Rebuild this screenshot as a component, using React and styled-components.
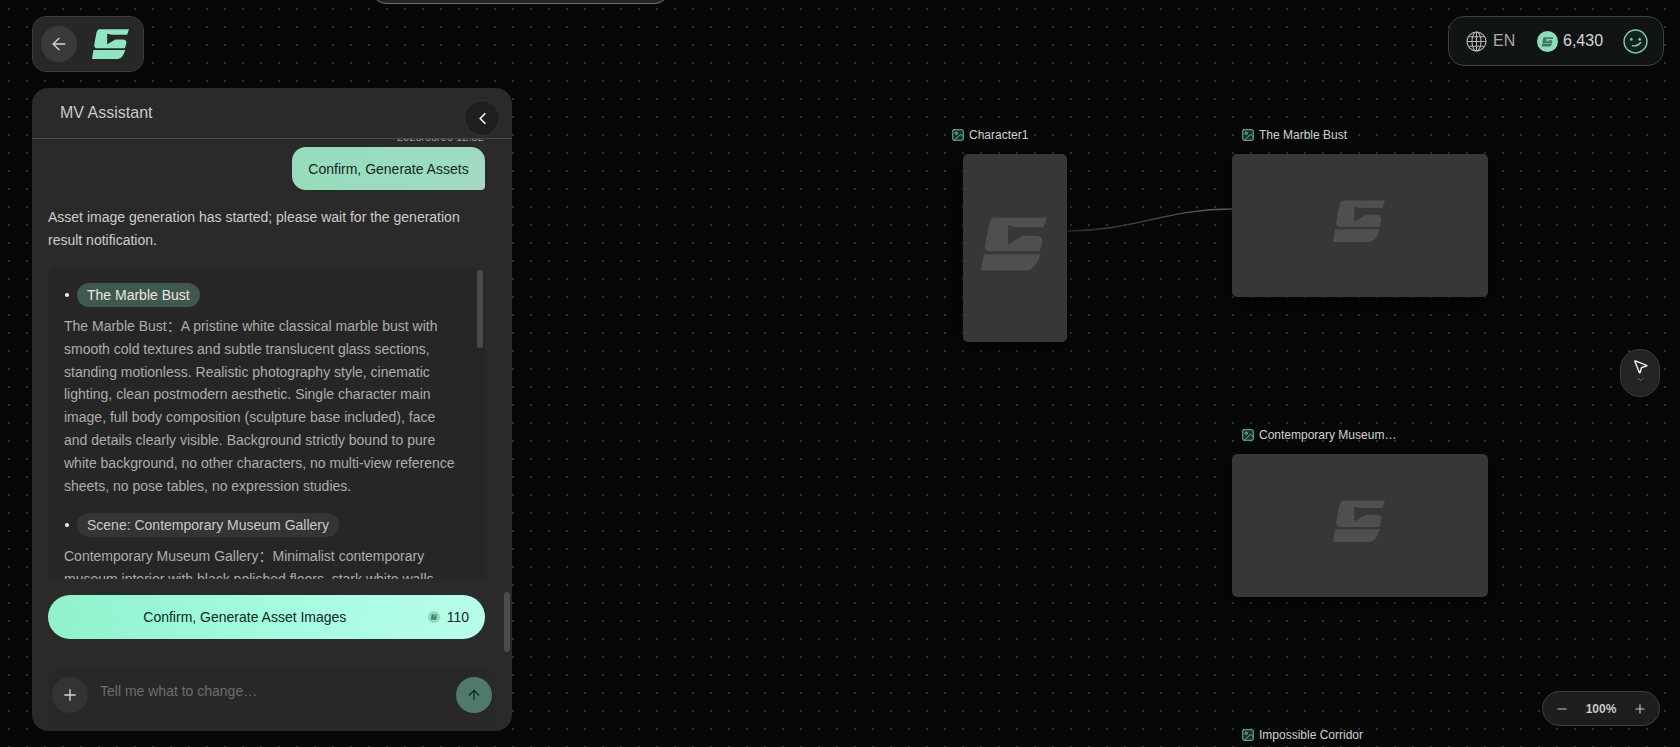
import React from "react";
import styled, { createGlobalStyle } from "styled-components";
import { ArrowLeft, ChevronLeft, ChevronDown, Plus, Minus, ArrowUp, MousePointer2, Image as ImageIcon } from "lucide-react";

const Global = createGlobalStyle`
  html, body { margin: 0; padding: 0; height: 100%; background: #050606; overflow: hidden; }
  * { box-sizing: border-box; }
  body { font-family: "Liberation Sans", "Noto Sans CJK SC", Arial, sans-serif; }
`;

const Canvas = styled.div`
  position: relative;
  width: 100%;
  height: 100vh;
  overflow: hidden;
  background-color: #060707;
  background-image: radial-gradient(circle at center, #313433 0.7px, transparent 1.1px);
  background-size: 18px 18px;
`;

const Stub = styled.div`
  position: absolute;
  left: 372px;
  top: -40px;
  width: 297px;
  height: 44px;
  border-radius: 14px;
  background: #262727;
  border: 1px solid #6f7170;
`;

const BackBar = styled.div`
  position: absolute;
  left: 32px;
  top: 16px;
  width: 112px;
  height: 56px;
  display: flex;
  align-items: center;
  gap: 15px;
  padding-left: 8px;
  border-radius: 14px;
  background: #262727;
  border: 1px solid #3a3b3b;
`;

const RoundButton = styled.button`
  width: 36px;
  height: 36px;
  border-radius: 50%;
  border: none;
  padding: 0;
  display: flex;
  align-items: center;
  justify-content: center;
  flex: none;
  background: ${(p) => p.$bg || "#3a3a3a"};
  color: ${(p) => p.$color || "#d4d4d4"};
`;

const Panel = styled.section`
  position: absolute;
  left: 32px;
  top: 88px;
  width: 480px;
  height: 643px;
  display: flex;
  flex-direction: column;
  border-radius: 16px;
  background: #2a2a2a;
  overflow: hidden;
`;

const PanelHeader = styled.header`
  flex: none;
  height: 51px;
  padding: 15px 28px 0;
  border-bottom: 1px solid #484848;
  color: #c9c9c9;
  font-size: 16px;
  line-height: 20px;
`;

const CollapseButton = styled(RoundButton)`
  position: absolute;
  left: 432px;
  top: 12px;
  background: #1f1f1f;
  border: 1px solid #333;
  color: #f0f0f0;
`;

const Thread = styled.div`
  flex: 1;
  min-height: 0;
  overflow: hidden;
  padding: 0 27px 0 16px;
  position: relative;
`;

const Stamp = styled.div`
  margin-top: -9px;
  height: 17px;
  text-align: right;
  padding-right: 1px;
  font-size: 11.2px;
  line-height: 14px;
  color: #9a9a9a;
`;

const BubbleRow = styled.div`
  display: flex;
  justify-content: flex-end;
`;

const Bubble = styled.div`
  width: 193px;
  height: 43px;
  display: flex;
  align-items: center;
  justify-content: center;
  border-radius: 14px 14px 4px 14px;
  background: linear-gradient(135deg, #95dcbc 0%, #9cdcc0 75%, #a9d6c4 100%);
  color: #12291f;
  font-size: 14px;
`;

const Reply = styled.p`
  margin: 16px 0 15px;
  font-size: 14px;
  line-height: 23px;
  color: #cdcdcd;
`;

const AssetCard = styled.div`
  position: relative;
  height: 330px;
  padding: 16px 25px 0 16px;
  border-radius: 12px 12px 0 0;
  background: #262626;
`;

const Track = styled.div`
  position: absolute;
  left: ${(p) => p.$left}px;
  top: ${(p) => p.$top}px;
  width: 6px;
  height: ${(p) => p.$height}px;
  border-radius: 3px;
  background: #4b4b4b;
`;

const Asset = styled.div`
  margin-bottom: 16px;
`;

const AssetTitle = styled.div`
  display: flex;
  align-items: center;
  height: 24px;
  gap: 8px;
  &::before {
    content: "";
    width: 4px;
    height: 4px;
    border-radius: 50%;
    margin-left: 1px;
    background: #eee;
  }
`;

const Pill = styled.span`
  height: 24px;
  padding: 0 10px;
  display: flex;
  align-items: center;
  border-radius: 12px;
  font-size: 14px;
  background: ${(p) => (p.$active ? "#41594d" : "#343434")};
  color: ${(p) => (p.$active ? "#e8e8e8" : "#c9c9c9")};
`;

const AssetText = styled.p`
  margin: 8px 0 0;
  font-size: 14px;
  line-height: 22.8px;
  color: #adadad;
`;

const CtaRow = styled.div`
  flex: none;
  padding: 16px 27px 29px 16px;
`;

const Cta = styled.button`
  width: 100%;
  height: 44px;
  display: flex;
  align-items: center;
  border: none;
  border-radius: 22px;
  padding: 0 16px;
  background: linear-gradient(100deg, #8ff2cb 0%, #a3fbe0 50%, #b8fdeb 100%);
  color: #0d2a20;
  font: 14px "Liberation Sans", Arial, sans-serif;
`;

const CtaLabel = styled.span`
  flex: 1;
  padding-right: 2px;
  text-align: center;
`;

const CtaCost = styled.span`
  display: flex;
  align-items: center;
  gap: 7px;
`;

const Composer = styled.div`
  flex: none;
  height: 63px;
  margin: 0 15px 0 16px;
  padding: 9px 5px 0 4px;
  display: flex;
  align-items: flex-start;
  gap: 12px;
  background: #282828;
  border-radius: 14px 14px 0 0;
`;

const Placeholder = styled.div`
  flex: 1;
  margin-top: 4px;
  font-size: 14px;
  line-height: 20px;
  color: #6d6d6d;
`;

const TopRight = styled.div`
  position: absolute;
  left: 1448px;
  top: 16px;
  width: 216px;
  height: 50px;
  display: flex;
  align-items: center;
  padding-left: 17px;
  border-radius: 16px;
  background: #101413;
  border: 1px solid #3d4140;
`;

const Lang = styled.span`
  margin-left: 6px;
  width: 44px;
  font-size: 16px;
  color: #aaa;
`;

const Credits = styled.span`
  margin-right: 22px;
  width: 43px;
  padding-left: 5px;
  font-size: 16px;
  color: #d8d8d8;
`;

const NodeLabel = styled.div`
  position: absolute;
  left: ${(p) => p.$x}px;
  top: ${(p) => p.$y}px;
  display: flex;
  align-items: center;
  gap: 4px;
  font-size: 12px;
  line-height: 14px;
  color: #d2d2d2;
  white-space: nowrap;
  svg { flex: none; }
`;

const NodeCard = styled.div`
  position: absolute;
  left: ${(p) => p.$x}px;
  top: ${(p) => p.$y}px;
  width: ${(p) => p.$w}px;
  height: ${(p) => p.$h}px;
  display: flex;
  align-items: center;
  justify-content: center;
  padding: 0 3px 8px 0;
  border-radius: 5px;
  background: #373737;
  box-shadow: 0 4px 14px rgba(0, 0, 0, 0.6);
`;

const EdgeLayer = styled.svg`
  position: absolute;
  left: 0;
  top: 0;
  pointer-events: none;
`;

const ToolDock = styled.div`
  position: absolute;
  left: 1620px;
  top: 349px;
  width: 40px;
  height: 48px;
  display: flex;
  flex-direction: column;
  align-items: center;
  padding-top: 8px;
  border-radius: 20px;
  background: #232524;
  border: 1px solid #3a3c3b;
  color: #f2f2f2;
`;

const ZoomBar = styled.div`
  position: absolute;
  left: 1542px;
  top: 691px;
  width: 118px;
  height: 35px;
  display: flex;
  align-items: center;
  justify-content: space-between;
  padding: 0 12px;
  border-radius: 18px;
  background: #1d1f1e;
  border: 1px solid #3d3f3e;
  color: #c8c8c8;
  font-size: 12px;
  font-weight: 700;
`;

const LOGO_BODY = "M42 2H200L190 31H105L82 26V83L127 57H165Q190 57 185 80L178 104H28Q8 104 13 80L24 22Q28 2 42 2Z";
const LOGO_BAR = "M8 113H180Q165 160 140 162H0Z";

function Logo({ width, color }) {
  return (
    <svg width={width} viewBox="0 0 200 162" fill={color} aria-hidden="true">
      <path d={LOGO_BODY} />
      <path d={LOGO_BAR} />
    </svg>
  );
}

function Globe() {
  return (
    <svg width="21" height="21" viewBox="0 0 21 21" fill="none" stroke="#b5b5b5" strokeWidth="1.1" aria-hidden="true">
      <circle cx="10.5" cy="10.5" r="9.5" />
      <ellipse cx="10.5" cy="10.5" rx="4.5" ry="9.5" />
      <path d="M10.5 1v19M1 10.5h19M2.4 5.8h16.2M2.4 15.2h16.2" />
    </svg>
  );
}

function Coin({ size }) {
  return (
    <svg width={size} height={size} viewBox="0 0 22 22" aria-hidden="true">
      <circle cx="11" cy="11" r="11" fill="#8fdcbc" />
      <g transform="translate(5 6.4) scale(0.06)" fill="#3c7a66">
        <path d={LOGO_BODY} />
        <path d={LOGO_BAR} />
      </g>
    </svg>
  );
}

function Smile() {
  return (
    <svg width="25" height="25" viewBox="0 0 24 24" fill="#10231e" stroke="#86c9ae" strokeWidth="1.4" strokeLinecap="round" aria-hidden="true">
      <circle cx="12" cy="12" r="11" />
      <circle cx="8" cy="10" r="1.3" fill="#86c9ae" stroke="none" />
      <circle cx="16" cy="10" r="1.3" fill="#86c9ae" stroke="none" />
      <path d="M9 16q5 1 8-3" fill="none" />
    </svg>
  );
}

const nodes = [
  { title: "Character1", lx: 951, ly: 128, x: 963, y: 154, w: 104, h: 188, logo: 66 },
  { title: "The Marble Bust", lx: 1241, ly: 128, x: 1232, y: 154, w: 256, h: 143, logo: 52 },
  { title: "Contemporary Museum…", lx: 1241, ly: 428, x: 1232, y: 454, w: 256, h: 143, logo: 52 },
];

export default function App() {
  return (
    <Canvas>
      <Global />
      <Stub />

      <EdgeLayer width="1680" height="747" aria-hidden="true">
        <defs>
          <linearGradient id="edge" x1="0" x2="1" y1="0" y2="0">
            <stop offset="0" stopColor="#2a2d2c" />
            <stop offset="1" stopColor="#5b6562" />
          </linearGradient>
        </defs>
        <path d="M1067 231C1135 231 1165 209 1232 209" fill="none" stroke="url(#edge)" strokeWidth="1.4" />
      </EdgeLayer>

      {nodes.map((n) => (
        <React.Fragment key={n.title}>
          <NodeLabel $x={n.lx} $y={n.ly}>
            <ImageIcon size={14} color="#7cc4a9" fill="#17332a" strokeWidth={1.6} />
            {n.title}
          </NodeLabel>
          <NodeCard $x={n.x} $y={n.y} $w={n.w} $h={n.h}>
            <Logo width={n.logo} color="#4f4f4f" />
          </NodeCard>
        </React.Fragment>
      ))}
      <NodeLabel $x={1241} $y={728}>
        <ImageIcon size={14} color="#7cc4a9" fill="#17332a" strokeWidth={1.6} />
        Impossible Corridor
      </NodeLabel>

      <BackBar>
        <RoundButton>
          <ArrowLeft size={20} strokeWidth={1.6} />
        </RoundButton>
        <Logo width={37} color="#8fe6c3" />
      </BackBar>

      <Panel>
        <PanelHeader>MV Assistant</PanelHeader>
        <CollapseButton>
          <ChevronLeft size={19} strokeWidth={2.2} />
        </CollapseButton>
        <Thread>
          <Stamp>2025/06/06 12:32</Stamp>
          <BubbleRow>
            <Bubble>Confirm, Generate Assets</Bubble>
          </BubbleRow>
          <Reply>Asset image generation has started; please wait for the generation result notification.</Reply>
          <AssetCard>
            <Asset>
              <AssetTitle>
                <Pill $active>The Marble Bust</Pill>
              </AssetTitle>
              <AssetText>
                The Marble Bust：A pristine white classical marble bust with smooth cold textures and subtle translucent glass sections, standing motionless. Realistic photography style, cinematic lighting, clean postmodern aesthetic. Single character main image, full body composition (sculpture base included), face and details clearly visible. Background strictly bound to pure white background, no other characters, no multi-view reference sheets, no pose tables, no expression studies.
              </AssetText>
            </Asset>
            <Asset>
              <AssetTitle>
                <Pill>Scene: Contemporary Museum Gallery</Pill>
              </AssetTitle>
              <AssetText>
                Contemporary Museum Gallery：Minimalist contemporary museum interior with black polished floors, stark white walls and soft overhead light.
              </AssetText>
            </Asset>
            <Track $left={429} $top={3} $height={78} />
          </AssetCard>
        </Thread>
        <CtaRow>
          <Cta>
            <CtaLabel>Confirm, Generate Asset Images</CtaLabel>
            <CtaCost>
              <Coin size={12} />
              110
            </CtaCost>
          </Cta>
        </CtaRow>
        <Composer>
          <RoundButton $bg="#333">
            <Plus size={18} strokeWidth={1.8} />
          </RoundButton>
          <Placeholder>Tell me what to change…</Placeholder>
          <RoundButton $bg="#4f7a6b" $color="#12201b">
            <ArrowUp size={16} strokeWidth={1.8} />
          </RoundButton>
        </Composer>
        <Track $left={472} $top={504} $height={60} />
      </Panel>

      <TopRight>
        <Globe />
        <Lang>EN</Lang>
        <Coin size={21} />
        <Credits>6,430</Credits>
        <Smile />
      </TopRight>

      <ToolDock>
        <MousePointer2 size={17} strokeWidth={2} />
        <ChevronDown size={9} color="#8a8a8a" />
      </ToolDock>

      <ZoomBar>
        <Minus size={14} />
        100%
        <Plus size={14} />
      </ZoomBar>
    </Canvas>
  );
}
